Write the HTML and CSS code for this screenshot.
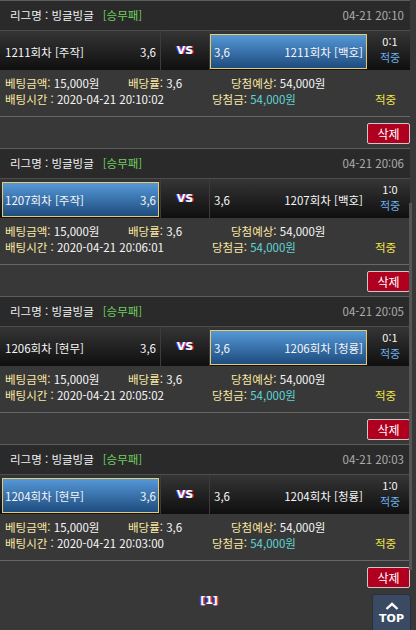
FILE: index.html
```html
<!DOCTYPE html>
<html lang="ko">
<head>
<meta charset="utf-8">
<title>배팅내역</title>
<link rel="stylesheet" href="styles.css">
</head>
<body>
<div class="list">
  <div class="card">
    <div class="head"><span>리그명 : 빙글빙글</span><span class="type">[승무패]</span><span class="date">04-21 20:10</span></div>
    <div class="match">
      <div class="cell home"><div class="box"><span>1211회차 [주작]</span><span>3,6</span></div></div>
      <div class="vs">VS</div>
      <div class="cell away"><div class="box sel"><span>3,6</span><span>1211회차 [백호]</span></div></div>
      <div class="score"><div>0:1</div><div class="blue">적중</div></div>
    </div>
    <div class="info">
      <div class="row"><span class="c1"><span class="lbl">베팅금액:</span> 15,000원</span><span class="c2"><span class="lbl">배당률:</span> 3,6</span><span><span class="lbl">당첨예상:</span> 54,000원</span></div>
      <div class="row"><span class="d1"><span class="lbl">배팅시간 :</span> 2020-04-21 20:10:02</span><span class="d2"><span class="lbl">당첨금:</span> <span class="cyan">54,000원</span></span><span class="yellow">적중</span></div>
    </div>
    <div class="foot"><button class="del">삭제</button></div>
  </div>

  <div class="card">
    <div class="head"><span>리그명 : 빙글빙글</span><span class="type">[승무패]</span><span class="date">04-21 20:06</span></div>
    <div class="match">
      <div class="cell home"><div class="box sel"><span>1207회차 [주작]</span><span>3,6</span></div></div>
      <div class="vs">VS</div>
      <div class="cell away"><div class="box"><span>3,6</span><span>1207회차 [백호]</span></div></div>
      <div class="score"><div>1:0</div><div class="blue">적중</div></div>
    </div>
    <div class="info">
      <div class="row"><span class="c1"><span class="lbl">베팅금액:</span> 15,000원</span><span class="c2"><span class="lbl">배당률:</span> 3,6</span><span><span class="lbl">당첨예상:</span> 54,000원</span></div>
      <div class="row"><span class="d1"><span class="lbl">배팅시간 :</span> 2020-04-21 20:06:01</span><span class="d2"><span class="lbl">당첨금:</span> <span class="cyan">54,000원</span></span><span class="yellow">적중</span></div>
    </div>
    <div class="foot"><button class="del">삭제</button></div>
  </div>

  <div class="card">
    <div class="head"><span>리그명 : 빙글빙글</span><span class="type">[승무패]</span><span class="date">04-21 20:05</span></div>
    <div class="match">
      <div class="cell home"><div class="box"><span>1206회차 [현무]</span><span>3,6</span></div></div>
      <div class="vs">VS</div>
      <div class="cell away"><div class="box sel"><span>3,6</span><span>1206회차 [청룡]</span></div></div>
      <div class="score"><div>0:1</div><div class="blue">적중</div></div>
    </div>
    <div class="info">
      <div class="row"><span class="c1"><span class="lbl">베팅금액:</span> 15,000원</span><span class="c2"><span class="lbl">배당률:</span> 3,6</span><span><span class="lbl">당첨예상:</span> 54,000원</span></div>
      <div class="row"><span class="d1"><span class="lbl">배팅시간 :</span> 2020-04-21 20:05:02</span><span class="d2"><span class="lbl">당첨금:</span> <span class="cyan">54,000원</span></span><span class="yellow">적중</span></div>
    </div>
    <div class="foot"><button class="del">삭제</button></div>
  </div>

  <div class="card">
    <div class="head"><span>리그명 : 빙글빙글</span><span class="type">[승무패]</span><span class="date">04-21 20:03</span></div>
    <div class="match">
      <div class="cell home"><div class="box sel"><span>1204회차 [현무]</span><span>3,6</span></div></div>
      <div class="vs">VS</div>
      <div class="cell away"><div class="box"><span>3,6</span><span>1204회차 [청룡]</span></div></div>
      <div class="score"><div>1:0</div><div class="blue">적중</div></div>
    </div>
    <div class="info">
      <div class="row"><span class="c1"><span class="lbl">베팅금액:</span> 15,000원</span><span class="c2"><span class="lbl">배당률:</span> 3,6</span><span><span class="lbl">당첨예상:</span> 54,000원</span></div>
      <div class="row"><span class="d1"><span class="lbl">배팅시간 :</span> 2020-04-21 20:03:00</span><span class="d2"><span class="lbl">당첨금:</span> <span class="cyan">54,000원</span></span><span class="yellow">적중</span></div>
    </div>
    <div class="foot"><button class="del">삭제</button></div>
  </div>
  <div class="pager">[1]</div>
</div>
<div class="thumb"></div>
<a class="top" href="#">
  <svg width="14" height="8" viewBox="0 0 14 8"><polyline points="1.5,7 7,1.8 12.5,7" fill="none" stroke="#fff" stroke-width="2.4"/></svg>
  <span>TOP</span>
</a>
</body>
</html>
```
FILE: styles.css
```css
html, body {
  margin: 0;
  padding: 0;
}
body {
  width: 416px;
  height: 630px;
  overflow: hidden;
  position: relative;
  background: #383838;
  font-family: "Noto Sans CJK KR", "Noto Sans", sans-serif;
  font-size: 11.5px;
  color: #f6f6f6;
}
.list {
  width: 410px;
}
.card {
  border-top: 1px solid #5c5c5c;
}
.head {
  height: 29px;
  line-height: 29px;
  background: #2a2a2a;
  display: flex;
  padding: 0 6px 0 10px;
  border-bottom: 1px solid #4c4c4c;
  color: #f0f0f0;
}
.type {
  color: #6fcf5f;
  margin-left: 9px;
}
.date {
  margin-left: auto;
  color: #acacac;
}
.match {
  height: 39px;
  display: flex;
  background: linear-gradient(#353535, #0f0f0f);
}
.cell {
  width: 160px;
  box-sizing: border-box;
  padding: 3px 1px 1px 2px;
}
.away {
  padding: 3px 3px 1px 0;
}
.box {
  height: 35px;
  box-sizing: border-box;
  border: 1px solid transparent;
  display: flex;
  align-items: center;
  justify-content: space-between;
  padding: 0 2px;
  white-space: nowrap;
}
.away .box {
  padding: 0 3px;
}
.box.sel {
  border-color: #ebca68;
  background: linear-gradient(#5598d8, #1e4c7e);
}
.vs {
  width: 50px;
  box-sizing: border-box;
  border-left: 1px solid #3c3c3c;
  border-right: 1px solid #3c3c3c;
  display: flex;
  align-items: center;
  justify-content: center;
  font-family: "DejaVu Sans", sans-serif;
  font-weight: bold;
  font-size: 11px;
  color: #fff;
  text-shadow: -1px 0 #3a4cff, 1px 0 #ff2b3a;
}
.score {
  width: 40px;
  text-align: center;
  padding-top: 2px;
  line-height: 16px;
  font-size: 11px;
}
.score div {
  height: 16px;
  overflow: hidden;
}
.blue {
  color: #6cb2ee;
}
.info {
  height: 47px;
  box-sizing: border-box;
  padding: 5px 0 0 5px;
  line-height: 16px;
  border-bottom: 1px solid #676767;
}
.row {
  display: flex;
  white-space: nowrap;
}
.c1 { width: 123px; }
.c2 { width: 103px; }
.d1 { width: 207px; }
.d2 { width: 163px; }
.lbl {
  color: #fbe8a2;
}
.cyan {
  color: #5ed6d6;
}
.yellow {
  color: #f3e646;
}
.foot {
  height: 31px;
  box-sizing: border-box;
  padding-top: 6px;
  display: flex;
  justify-content: flex-end;
}
.del {
  width: 43px;
  height: 21px;
  padding: 0;
  background: #b1001f;
  border: 1px solid #c9c9c9;
  border-radius: 2px;
  color: #fff;
  font-family: "Noto Sans CJK KR", sans-serif;
  font-size: 12px;
}
.pager {
  text-align: center;
  padding: 1px 0 0 8px;
  line-height: 16px;
  font-family: "DejaVu Sans", sans-serif;
  font-weight: bold;
  font-size: 11px;
  color: #fff;
  text-shadow: -1px 0 #3a4cff, 1px 0 #ff2b3a;
}
.thumb {
  position: absolute;
  left: 409px;
  top: 203px;
  width: 3px;
  height: 367px;
  background: #555;
}
.top {
  position: absolute;
  left: 372px;
  top: 594px;
  width: 39px;
  height: 42px;
  box-sizing: border-box;
  background: #3a4a63;
  border: 1px solid #28303e;
  border-radius: 3px;
  display: flex;
  flex-direction: column;
  align-items: center;
  padding-top: 7px;
  text-decoration: none;
  color: #fff;
  font-family: "DejaVu Sans", sans-serif;
  font-weight: bold;
  font-size: 11px;
  line-height: 12px;
}
.top svg {
  display: block;
  margin-bottom: 3px;
}
```
